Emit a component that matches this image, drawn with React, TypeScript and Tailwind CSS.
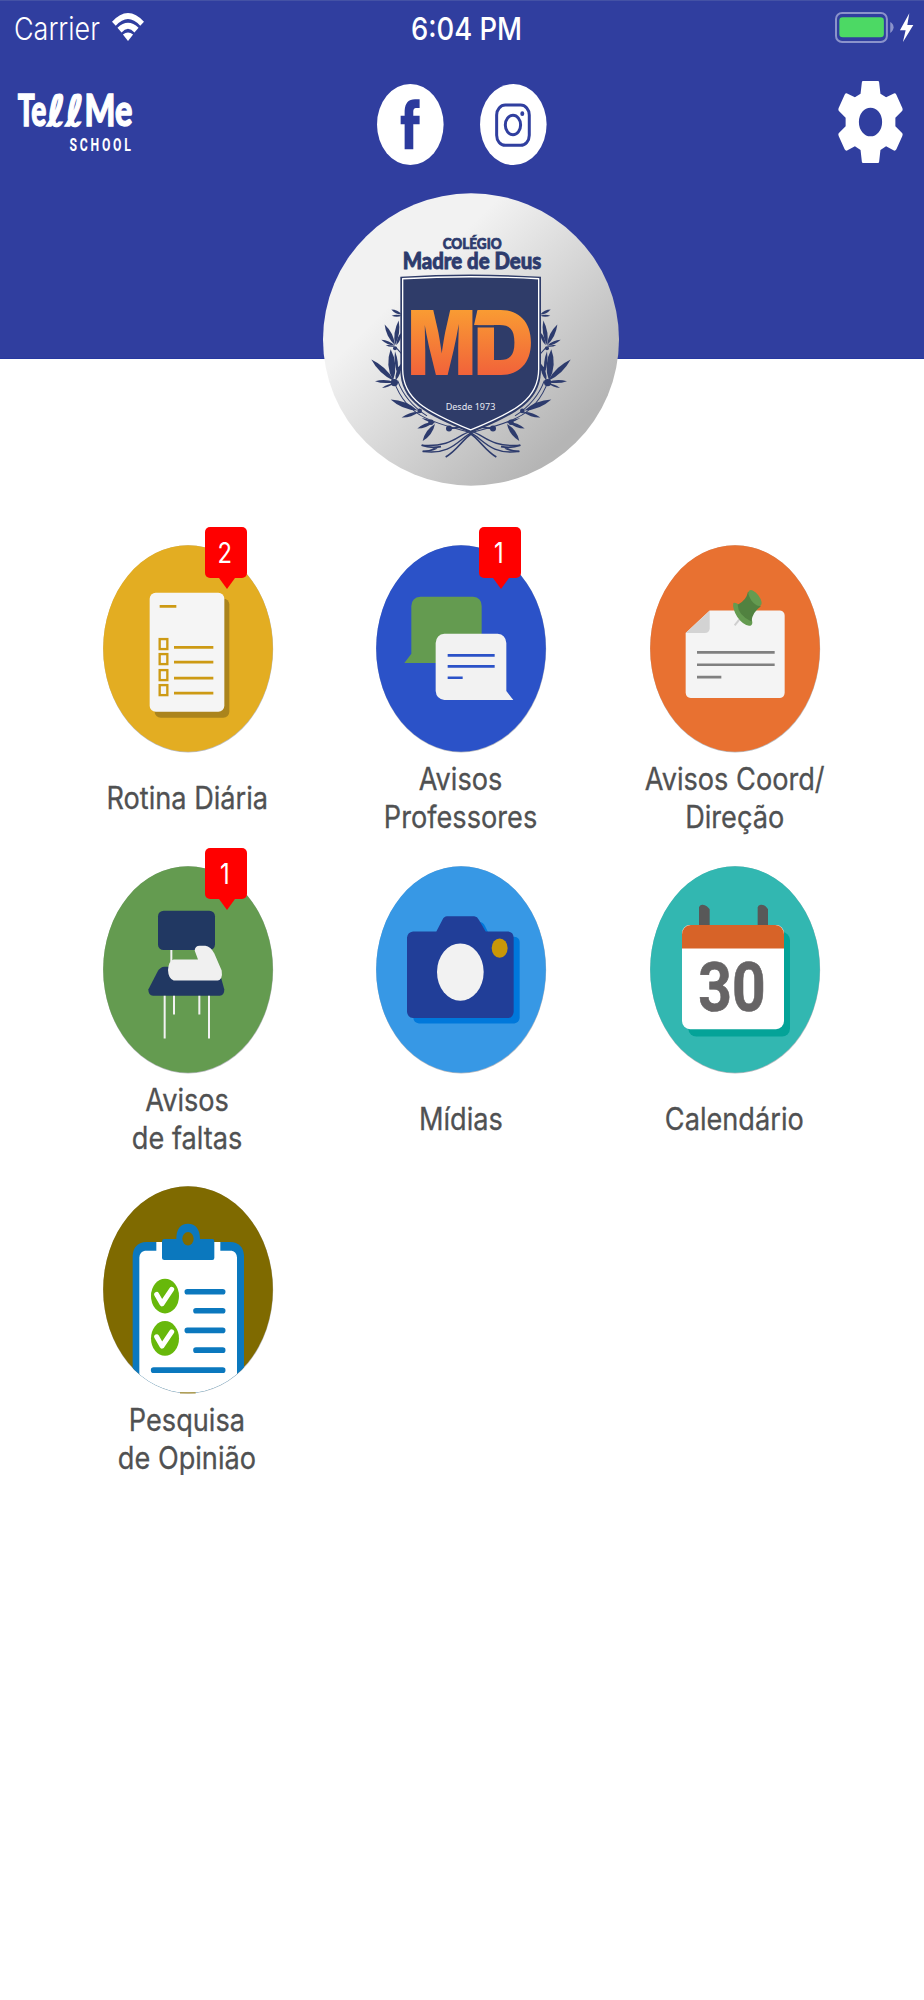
import React from "react";

const Leaf: React.FC<{ d: number[] }> = ({ d }) => {
  const [x1, y1, x2, y2, w] = d;
  const mx = (x1 + x2) / 2;
  const my = (y1 + y2) / 2;
  const len = Math.hypot(x2 - x1, y2 - y1);
  const nx = (-(y2 - y1) / len) * w;
  const ny = ((x2 - x1) / len) * w;
  return (
    <path
      d={`M${x1} ${y1} Q${mx + nx} ${my + ny} ${x2} ${y2} Q${mx - nx} ${my - ny} ${x1} ${y1}Z`}
    />
  );
};

// base x, base y, tip x, tip y, width
const leaves = [
  [274, 402, 243, 387, 8],
  [274, 406, 244, 406, 6],
  [254, 494, 223, 432, 13],
  [254, 494, 265, 420, 13],
  [254, 496, 213, 478, 8],
  [254, 498, 226, 494, 5],
  [258, 494, 274, 455, 9],
  [252, 602, 183, 537, 16],
  [248, 600, 241, 506, 21],
  [252, 604, 194, 602, 9],
  [252, 608, 215, 622, 6],
  [256, 600, 272, 550, 12],
  [262, 580, 254, 512, 9],
  [322, 690, 241, 657, 16],
  [325, 694, 274, 711, 10],
  [370, 724, 321, 744, 10],
  [374, 730, 337, 781, 14],
  [376, 728, 334, 712, 6],
];

const Laurel = () => (
  <g fill="#2d3b6d">
    {leaves.map((d, i) => (
      <Leaf key={i} d={d} />
    ))}
    <circle cx="252" cy="606" r="11" />
    <circle cx="254" cy="503" r="6" />
    <circle cx="265" cy="566" r="7" />
    <circle cx="328" cy="691" r="7" />
    <circle cx="362" cy="725" r="8" />
    <circle cx="416" cy="744" r="9" />
    <g fill="none" stroke="#2d3b6d" strokeWidth="3">
      <path d="M256 500 L274 520" />
      <path d="M250 600 C268 650 300 690 345 712 S430 742 481 756" />
      <path d="M262 600 C280 650 310 680 350 706" />
      <path d="M416 744 L450 740" strokeWidth="5" />
      <path d="M478 753 C440 765 425 800 334 794" strokeWidth="4" />
      <path d="M484 756 C450 770 425 826 337 812" strokeWidth="4" />
      <path d="M334 794 Q360 804 392 798M337 812 Q360 812 380 802" strokeWidth="5" />
      <path d="M486 758 C460 772 440 810 406 829" strokeWidth="5" />
    </g>
  </g>
);

const Crest = () => (
  <svg viewBox="38 38 888 878" preserveAspectRatio="none" className="block h-[293px] w-[296px]">
    <defs>
      <linearGradient id="silver" x1="0.15" y1="0.15" x2="0.85" y2="0.85">
        <stop offset="0.22" stopColor="#f2f2f2" />
        <stop offset="0.97" stopColor="#b5b5b5" />
      </linearGradient>
      <linearGradient id="flame" gradientUnits="userSpaceOnUse" x1="0" y1="390" x2="0" y2="584">
        <stop offset="0" stopColor="#f99b33" />
        <stop offset="1" stopColor="#f1623a" />
      </linearGradient>
    </defs>
    <ellipse cx="482" cy="477" rx="444" ry="438" fill="url(#silver)" />
    <Laurel />
    <g transform="translate(964 0) scale(-1 1)">
      <Laurel />
    </g>
    <path d="M270 289 Q481 276 692 289 V566 C692 662 620 700 481 757 C342 700 270 662 270 566Z" fill="#2f3c69" />
    <path
      d="M277 295 Q481 283 685 295 V566 C685 656 615 693 481 748 C347 693 277 656 277 566Z"
      fill="none"
      stroke="#fff"
      strokeWidth="4"
    />
    <g fill="#2d3b6d" stroke="#2d3b6d" className="font-['Lato'] font-black">
      <text x="397" y="206" fontSize="43" textLength="177" lengthAdjust="spacingAndGlyphs" strokeWidth="2">COLÉGIO</text>
      <text x="277" y="267" fontSize="66" textLength="416" lengthAdjust="spacingAndGlyphs" strokeWidth="2.5">Madre de Deus</text>
    </g>
    <g fill="url(#flame)" className="font-['Inter'] font-black">
      <text x="292" y="584" fontSize="267" textLength="204" lengthAdjust="spacingAndGlyphs">M</text>
      <text x="490" y="584" fontSize="267" textLength="180" lengthAdjust="spacingAndGlyphs">D</text>
      <path d="M501 390 L491 434 H510 V390Z" />
    </g>
    <path d="M490 434 H553 V441 H490Z" fill="#2f3c69" />
    <text x="406" y="688" fontSize="29" textLength="149" lengthAdjust="spacingAndGlyphs" fill="#e8eaf2" className="font-['Noto_Sans']">
      Desde 1973
    </text>
  </svg>
);

const StatusBar = () => (
  <div className="grid h-[57px] grid-cols-3 items-start border-t border-[#4452a5] pt-[8px] text-[31.5px] leading-[40px] text-white">
    <div className="flex items-start pl-[13.5px]">
      <span className="w-[98.5px] origin-left scale-x-[0.855] whitespace-nowrap font-light">Carrier</span>
      <svg viewBox="335 40 94 83" preserveAspectRatio="none" className="mt-[4px] h-[28px] w-[32px]" fill="#fff">
        <path d="M335 66 Q382 14 429 66 L418 78 Q382 38 346 78Z" />
        <path d="M351 84 Q382 54 413 84 L401 98 Q382 76 363 98Z" />
        <path d="M367 104 Q382 92 397 104 L382 123Z" />
      </svg>
    </div>
    <span className="ml-[9px] scale-x-[0.87] text-center font-medium">6:04 PM</span>
    <svg viewBox="104 36 236 93" preserveAspectRatio="none" className="mt-[3px] mr-[10px] h-[31px] w-[79px] justify-self-end">
      <rect x="107" y="39" width="152" height="87" rx="18" fill="none" stroke="#8b93cb" strokeWidth="6" />
      <rect x="117" y="52" width="133" height="60" rx="10" fill="#4cd964" />
      <path d="M269 66 Q279 72 279 82 T269 99Z" fill="#8b93cb" />
      <path d="M326 40 L298 91 H315 L307 126 L338 75 H320Z" fill="#fff" />
    </svg>
  </div>
);

const NavBar = () => (
  <div className="grid grid-cols-[1fr_auto_1fr] pt-[24px]">
    <svg viewBox="52 276 350 184" preserveAspectRatio="none" className="mt-[11px] ml-[17px] h-[61px] w-[117px] overflow-visible" fill="#fff">
      <g stroke="#fff" strokeWidth="4" className="font-['Lato'] font-black">
        <text x="54" y="379" fontSize="134" textLength="86" lengthAdjust="spacingAndGlyphs">Te</text>
        <text x="142" y="379" fontSize="128" textLength="110" lengthAdjust="spacingAndGlyphs" className="font-['DejaVu_Sans'] font-bold">ℓℓ</text>
        <text x="254" y="379" fontSize="134" textLength="143" lengthAdjust="spacingAndGlyphs">Me</text>
      </g>
      <text x="209" y="453" fontSize="53" letterSpacing="12" textLength="192" lengthAdjust="spacingAndGlyphs" className="font-['Roboto'] font-bold">
        SCHOOL
      </text>
    </svg>
    <div className="flex gap-[36px] pt-[3px]">
      <svg viewBox="82 252 200 243" preserveAspectRatio="none" className="h-[81px] w-[66.6px]">
        <ellipse cx="182" cy="373.5" rx="100" ry="121.5" fill="#fff" />
        <path
          d="M165 448 V373 H153 V347 H165 V332 Q167 298 196 298 H210 V324 H199 Q191 325 191 334 V347 H210 V373 H191 V448Z"
          fill="#2b3a9d"
        />
      </svg>
      <svg viewBox="390 252 200 243" preserveAspectRatio="none" className="h-[81px] w-[66.6px]">
        <ellipse cx="490" cy="373.5" rx="100" ry="121.5" fill="#fff" />
        <g fill="none" stroke="#303f9f" strokeWidth="9">
          <rect x="440" y="315" width="98" height="121" rx="26" ry="30" />
          <ellipse cx="489" cy="375" rx="23" ry="29" />
        </g>
        <ellipse cx="517" cy="341" rx="6" ry="7" fill="#303f9f" />
      </svg>
    </div>
    <svg viewBox="113 244 196 246" preserveAspectRatio="none" className="mr-[21px] h-[82px] w-[65px] justify-self-end">
      <path
        d="M189 244H233Q237 244 237 248L241 282L258 293L283 281Q287 281 289 285L307 325Q309 329 307 333L286 354V380L307 401Q309 405 307 409L289 449Q287 453 283 453L258 440L241 451L237 486Q237 490 233 490H189Q185 490 185 486L181 451L164 440L139 453Q135 453 133 449L115 409Q113 405 115 401L136 380V354L115 333Q113 329 115 325L133 285Q135 281 139 281L164 293L181 282L185 248Q185 244 189 244ZM211 324A35 43 0 1 0 211 410A35 43 0 1 0 211 324Z"
        fill="#fff"
        fillRule="evenodd"
      />
    </svg>
  </div>
);

const Disc: React.FC<{ x: number; y: number; color: string; children: React.ReactNode }> = ({ x, y, color, children }) => (
  <svg viewBox={`${x} ${y} 510 622`} preserveAspectRatio="none" className="block h-[207.5px] w-[170px] overflow-visible">
    <ellipse cx={x + 255.5} cy={y + 311.5} rx="255" ry="310.5" fill="#b9bbc0" />
    <ellipse cx={x + 255} cy={y + 310} rx="254.5" ry="309.5" fill={color} />
    {children}
  </svg>
);

const RoutineIcon = () => (
  <Disc x={38} y={90} color="#e3ad22">
    <rect x="193" y="250" width="224" height="358" rx="18" fill="#ab841c" />
    <rect x="178" y="233" width="224" height="357" rx="18" fill="#f5f5f5" />
    <g fill="none" stroke="#cd9a14" strokeWidth="7">
      <path d="M208 274H258M251 397H369M251 441H369M251 489H369M251 534H369" strokeWidth="8" />
      <rect x="208" y="372" width="23" height="30" />
      <rect x="208" y="417" width="23" height="30" />
      <rect x="208" y="465" width="23" height="30" />
      <rect x="208" y="510" width="23" height="30" />
    </g>
  </Disc>
);

const ChatIcon = () => (
  <Disc x={49} y={90} color="#2b52c8">
    <path d="M182 245H340Q366 247 366 273V444H134L155 416V273Q156 247 182 245Z" fill="#649b50" />
    <path d="M254 356H414Q438 358 440 384V528L461 555H254Q230 552 228 528V384Q230 358 254 356Z" fill="#f2f2f2" />
    <path d="M264 421H405M264 454H405M264 488H309" stroke="#2b52c8" strokeWidth="8" />
  </Disc>
);

const NoteIcon = () => (
  <Disc x={60} y={90} color="#e87131">
    <path d="M239 286H450Q464 288 464 302V533Q463 547 450 549H182Q168 547 167 533V354Z" fill="#f4f4f4" />
    <path d="M239 287V341Q237 354 224 354H167Z" fill="#d3d3d3" />
    <path d="M201 412H434M201 449H434M201 486H274" stroke="#808080" strokeWidth="8" />
    <path d="M336 303L314 331" stroke="#cfcfcf" strokeWidth="6" />
    <path d="M310 264Q322 260 342 284Q366 305 367 322Q367 332 357 332Q340 331 322 306Q306 280 310 264Z" fill="#649b50" />
    <path d="M354 230Q349 256 323 269Q324 300 364 319Q368 290 392 274Q378 240 354 230Z" fill="#518240" />
    <ellipse cx="375" cy="249" rx="13" ry="28" transform="rotate(-37 375 249)" fill="#649b50" />
  </Disc>
);

const ChairIcon = () => (
  <Disc x={38} y={92} color="#649b50">
    <rect x="203" y="226" width="171" height="118" rx="17" fill="#213862" />
    <path d="M222 394H372Q382 396 388 412L402 462Q402 479 388 481H188Q174 479 174 462L203 406Q210 395 222 394Z" fill="#213862" />
    <path d="M243 344V380M223 481V609M251 481V537M327 481V537M356 481V609" stroke="#f2f2f2" strokeWidth="6" />
    <path
      d="M250 372H323L313 345Q314 331 328 331H345Q361 333 372 354L394 405Q398 432 382 435H250Q234 430 233 404Q235 375 250 372Z"
      fill="#f0f0f0"
    />
  </Disc>
);

const CameraIcon = () => (
  <Disc x={49} y={92} color="#3798e5">
    <path d="M162 304H244L270 260H360Q370 260 376 272L392 304H464Q480 306 480 320V548Q478 562 464 564H178Q162 562 161 548Z" fill="#0078db" />
    <path
      d="M160 288H230L248 254Q253 243 262 243H344Q353 244 358 254L378 288H446Q461 290 462 306V530Q460 546 446 548H160Q144 546 142 530V306Q144 290 160 288Z"
      fill="#213e98"
    />
    <ellipse cx="302" cy="410" rx="70" ry="86" fill="#f2f2f2" />
    <ellipse cx="420" cy="338" rx="24" ry="29" fill="#c99708" />
  </Disc>
);

const CalendarIcon = () => (
  <Disc x={60} y={92} color="#32b7b1">
    <rect x="175" y="290" width="305" height="313" rx="24" fill="#04a398" />
    <path d="M207 272V216Q209 207 218 208Q232 210 239 222V272ZM383 272V216Q385 207 394 208Q408 210 414 222V272Z" fill="#585858" />
    <rect x="156" y="269" width="306" height="312" rx="24" fill="#fff" />
    <path d="M156 339V297Q158 271 182 269H436Q460 271 462 297V339Z" fill="#d76328" />
    <text
      x="205"
      y="527"
      fontSize="206"
      textLength="202"
      lengthAdjust="spacingAndGlyphs"
      fill="#666465"
      stroke="#666465"
      strokeWidth="2"
      className="font-['Roboto'] font-bold"
    >
      30
    </text>
  </Disc>
);

const SurveyIcon = () => (
  <Disc x={38} y={48} color="#7f6a00">
    <clipPath id="survey">
      <ellipse cx="293" cy="358" rx="255" ry="310.5" />
    </clipPath>
    <g clipPath="url(#survey)">
      <path d="M127 700V256Q130 218 168 216H420Q458 218 461 256V700Z" fill="#0b78be" />
      <path d="M147 700V262Q149 244 164 242H198V216H390V242H424Q438 244 440 262V700Z" fill="#fff" />
      <path d="M222 207H258Q258 162 293 161Q328 162 329 207H366Q372 207 372 214V264Q372 270 366 270H222Q215 270 215 264V214Q215 207 222 207Z" fill="#0b78be" />
      <ellipse cx="293" cy="206" rx="17" ry="20" fill="#7f6a00" />
      <ellipse cx="224" cy="378" rx="42" ry="52" fill="#67b80b" />
      <ellipse cx="224" cy="505" rx="42" ry="52" fill="#67b80b" />
      <path d="M199 373L215 401L244 358M199 500L215 528L244 485" fill="none" stroke="#fff" strokeWidth="15" strokeLinecap="round" strokeLinejoin="round" />
      <path
        d="M291 365H397M317 422H397M291 481H397M317 540H397M190 600H397"
        stroke="#0b78be"
        strokeWidth="17"
        strokeLinecap="round"
      />
    </g>
    <path d="M269 668H316" stroke="#a8923c" strokeWidth="4" />
  </Disc>
);

const Badge: React.FC<{ count: number }> = ({ count }) => (
  <div className="absolute -top-[18px] left-[102.5px] h-[51px] w-[42px] rounded-[5px] bg-[#ff0000] text-center text-[29px] leading-[52px] text-white">
    <span className="mr-[2px] inline-block scale-x-[0.82]">{count}</span>
    <svg viewBox="0 0 16 11" className="absolute top-[51px] left-[14px] h-[11px] w-[16px]">
      <path d="M0 0H16L8 11Z" fill="#ff0000" />
    </svg>
  </div>
);

const menu = [
  { label: "Rotina Diária", icon: <RoutineIcon />, count: 2 },
  { label: "Avisos\nProfessores", icon: <ChatIcon />, count: 1 },
  { label: "Avisos Coord/\nDireção", icon: <NoteIcon /> },
  { label: "Avisos\nde faltas", icon: <ChairIcon />, count: 1 },
  { label: "Mídias", icon: <CameraIcon /> },
  { label: "Calendário", icon: <CalendarIcon /> },
  { label: "Pesquisa\nde Opinião", icon: <SurveyIcon /> },
];

const App: React.FC = () => {
  return (
    <div className="min-h-[2000px] w-[924px] overflow-hidden bg-white font-['Inter',sans-serif]">
      <header className="h-[359px] border-b border-[#2638a0] bg-[#303e9f]">
        <StatusBar />
        <NavBar />
      </header>
      <div className="relative -mt-[166px] ml-[323px] w-[296px]">
        <Crest />
      </div>
      <main className="mt-[59px] ml-[50.8px] grid w-[821px] grid-cols-3 gap-y-[22px]">
        {menu.map((item) => (
          <div key={item.label} className="flex flex-col items-center">
            <div className="relative">
              {item.icon}
              {item.count && <Badge count={item.count} />}
            </div>
            <div className="mr-[1px] flex h-[91px] items-center">
              <p className="scale-x-[0.876] text-center text-[31px] leading-[38px] whitespace-pre text-[#505152] [-webkit-text-stroke:0.3px_#505152]">
                {item.label}
              </p>
            </div>
          </div>
        ))}
      </main>
    </div>
  );
};

export default App;
